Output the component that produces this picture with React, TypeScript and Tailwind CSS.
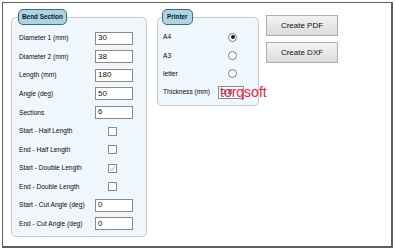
import React from "react";

const bendRows: { label: string; value?: string; check?: boolean; checked?: boolean }[] = [
  { label: "Diameter 1 (mm)", value: "30" },
  { label: "Diameter 2 (mm)", value: "38" },
  { label: "Length (mm)", value: "180" },
  { label: "Angle (deg)", value: "50" },
  { label: "Sections", value: "6" },
  { label: "Start - Half Length", check: true },
  { label: "End - Half Length", check: true },
  { label: "Start - Double Length", check: true, checked: true },
  { label: "End - Double Length", check: true },
  { label: "Start - Cut Angle (deg)", value: "0" },
  { label: "End - Cut Angle (deg)", value: "0" },
];

function Legend({ children }: { children: React.ReactNode }) {
  return (
    <legend className="ml-[-1px] h-[16px] px-[3px] flex items-center rounded-[5px] border border-[#4f6472] bg-[#a8d6e8] text-[6.4px] font-bold text-[#111]">
      {children}
    </legend>
  );
}

function TextBox({ value, w = "w-[38px]" }: { value: string; w?: string }) {
  return (
    <div className={`${w} h-[13px] border border-[#8a8a8a] bg-white pl-[2px] flex items-center text-[8px] text-[#111]`}>
      {value}
    </div>
  );
}

function Radio({ on }: { on?: boolean }) {
  return (
    <div className="w-[9px] h-[9px] rounded-full border border-[#7d7d7d] bg-white flex items-center justify-center">
      {on && <div className="w-[4px] h-[4px] rounded-full bg-[#1a1a1a]" />}
    </div>
  );
}

export default function App() {
  return (
    <div
      className="w-[395px] h-[251px] bg-white pt-[2px] pl-[2px]"
      style={{ fontFamily: '"Liberation Sans", Arial, sans-serif' }}
    >
      <div className="w-[391px] h-[246px] border-t border-l border-r-2 border-b-2 border-[#5e5e5e] flex items-start pl-[8px] pt-[6px]">
        {/* Bend Section */}
        <fieldset className="w-[136px] h-[228px] rounded-[5px] border border-[#c3cbd3] bg-[#eff6fc] pl-[7px] pt-[4px]">
          <Legend>Bend Section</Legend>
          {bendRows.map((r) => (
            <div key={r.label} className="h-[18.55px] grid grid-cols-[76px_40px] items-center">
              <span className="text-[6.6px] text-[#0a0a0a] whitespace-nowrap">{r.label}</span>
              {r.check ? (
                <div className="ml-[13px] w-[9px] h-[9px] border border-[#8a8a8a] bg-white flex items-center justify-center">
                  {r.checked && (
                    <svg width="7" height="7" viewBox="0 0 7 7">
                      <path d="M1 3.6 L2.8 5.3 L6 1.4" fill="none" stroke="#9a9a9a" strokeWidth="0.9" />
                    </svg>
                  )}
                </div>
              ) : (
                <TextBox value={r.value ?? ""} />
              )}
            </div>
          ))}
        </fieldset>

        {/* Printer */}
        <fieldset className="ml-[10px] w-[102px] h-[97px] rounded-[5px] border border-[#c3cbd3] bg-[#eff6fc] pl-[5px] pt-[3px]">
          <Legend>
            <span className="px-[1px]">Printer</span>
          </Legend>
          {[
            { label: "A4", on: true },
            { label: "A3" },
            { label: "letter" },
          ].map((r) => (
            <div key={r.label} className="h-[18.3px] grid grid-cols-[65px_20px] items-center">
              <span className="text-[6.6px] text-[#0a0a0a]">{r.label}</span>
              <Radio on={r.on} />
            </div>
          ))}
          <div className="h-[18.3px] flex items-center">
            <span className="w-[55px] text-[6.6px] text-[#0a0a0a] whitespace-nowrap">Thickness (mm)</span>
            <div className="relative">
              <TextBox value="0.8" w="w-[26px]" />
              <span className="absolute left-[2px] top-[-2px] text-[14px] leading-[16px] text-[#eb2545] whitespace-nowrap">
                torqsoft
              </span>
            </div>
          </div>
        </fieldset>

        {/* Buttons */}
        <div className="ml-[7px] mt-[6px] flex flex-col gap-[6px]">
          {["Create PDF", "Create DXF"].map((t) => (
            <button
              key={t}
              className="w-[72px] h-[21px] border border-[#adadad] bg-gradient-to-b from-[#f3f3f3] to-[#dcdcdc] text-[8px] text-[#111] flex items-center justify-center"
            >
              {t}
            </button>
          ))}
        </div>
      </div>
    </div>
  );
}
